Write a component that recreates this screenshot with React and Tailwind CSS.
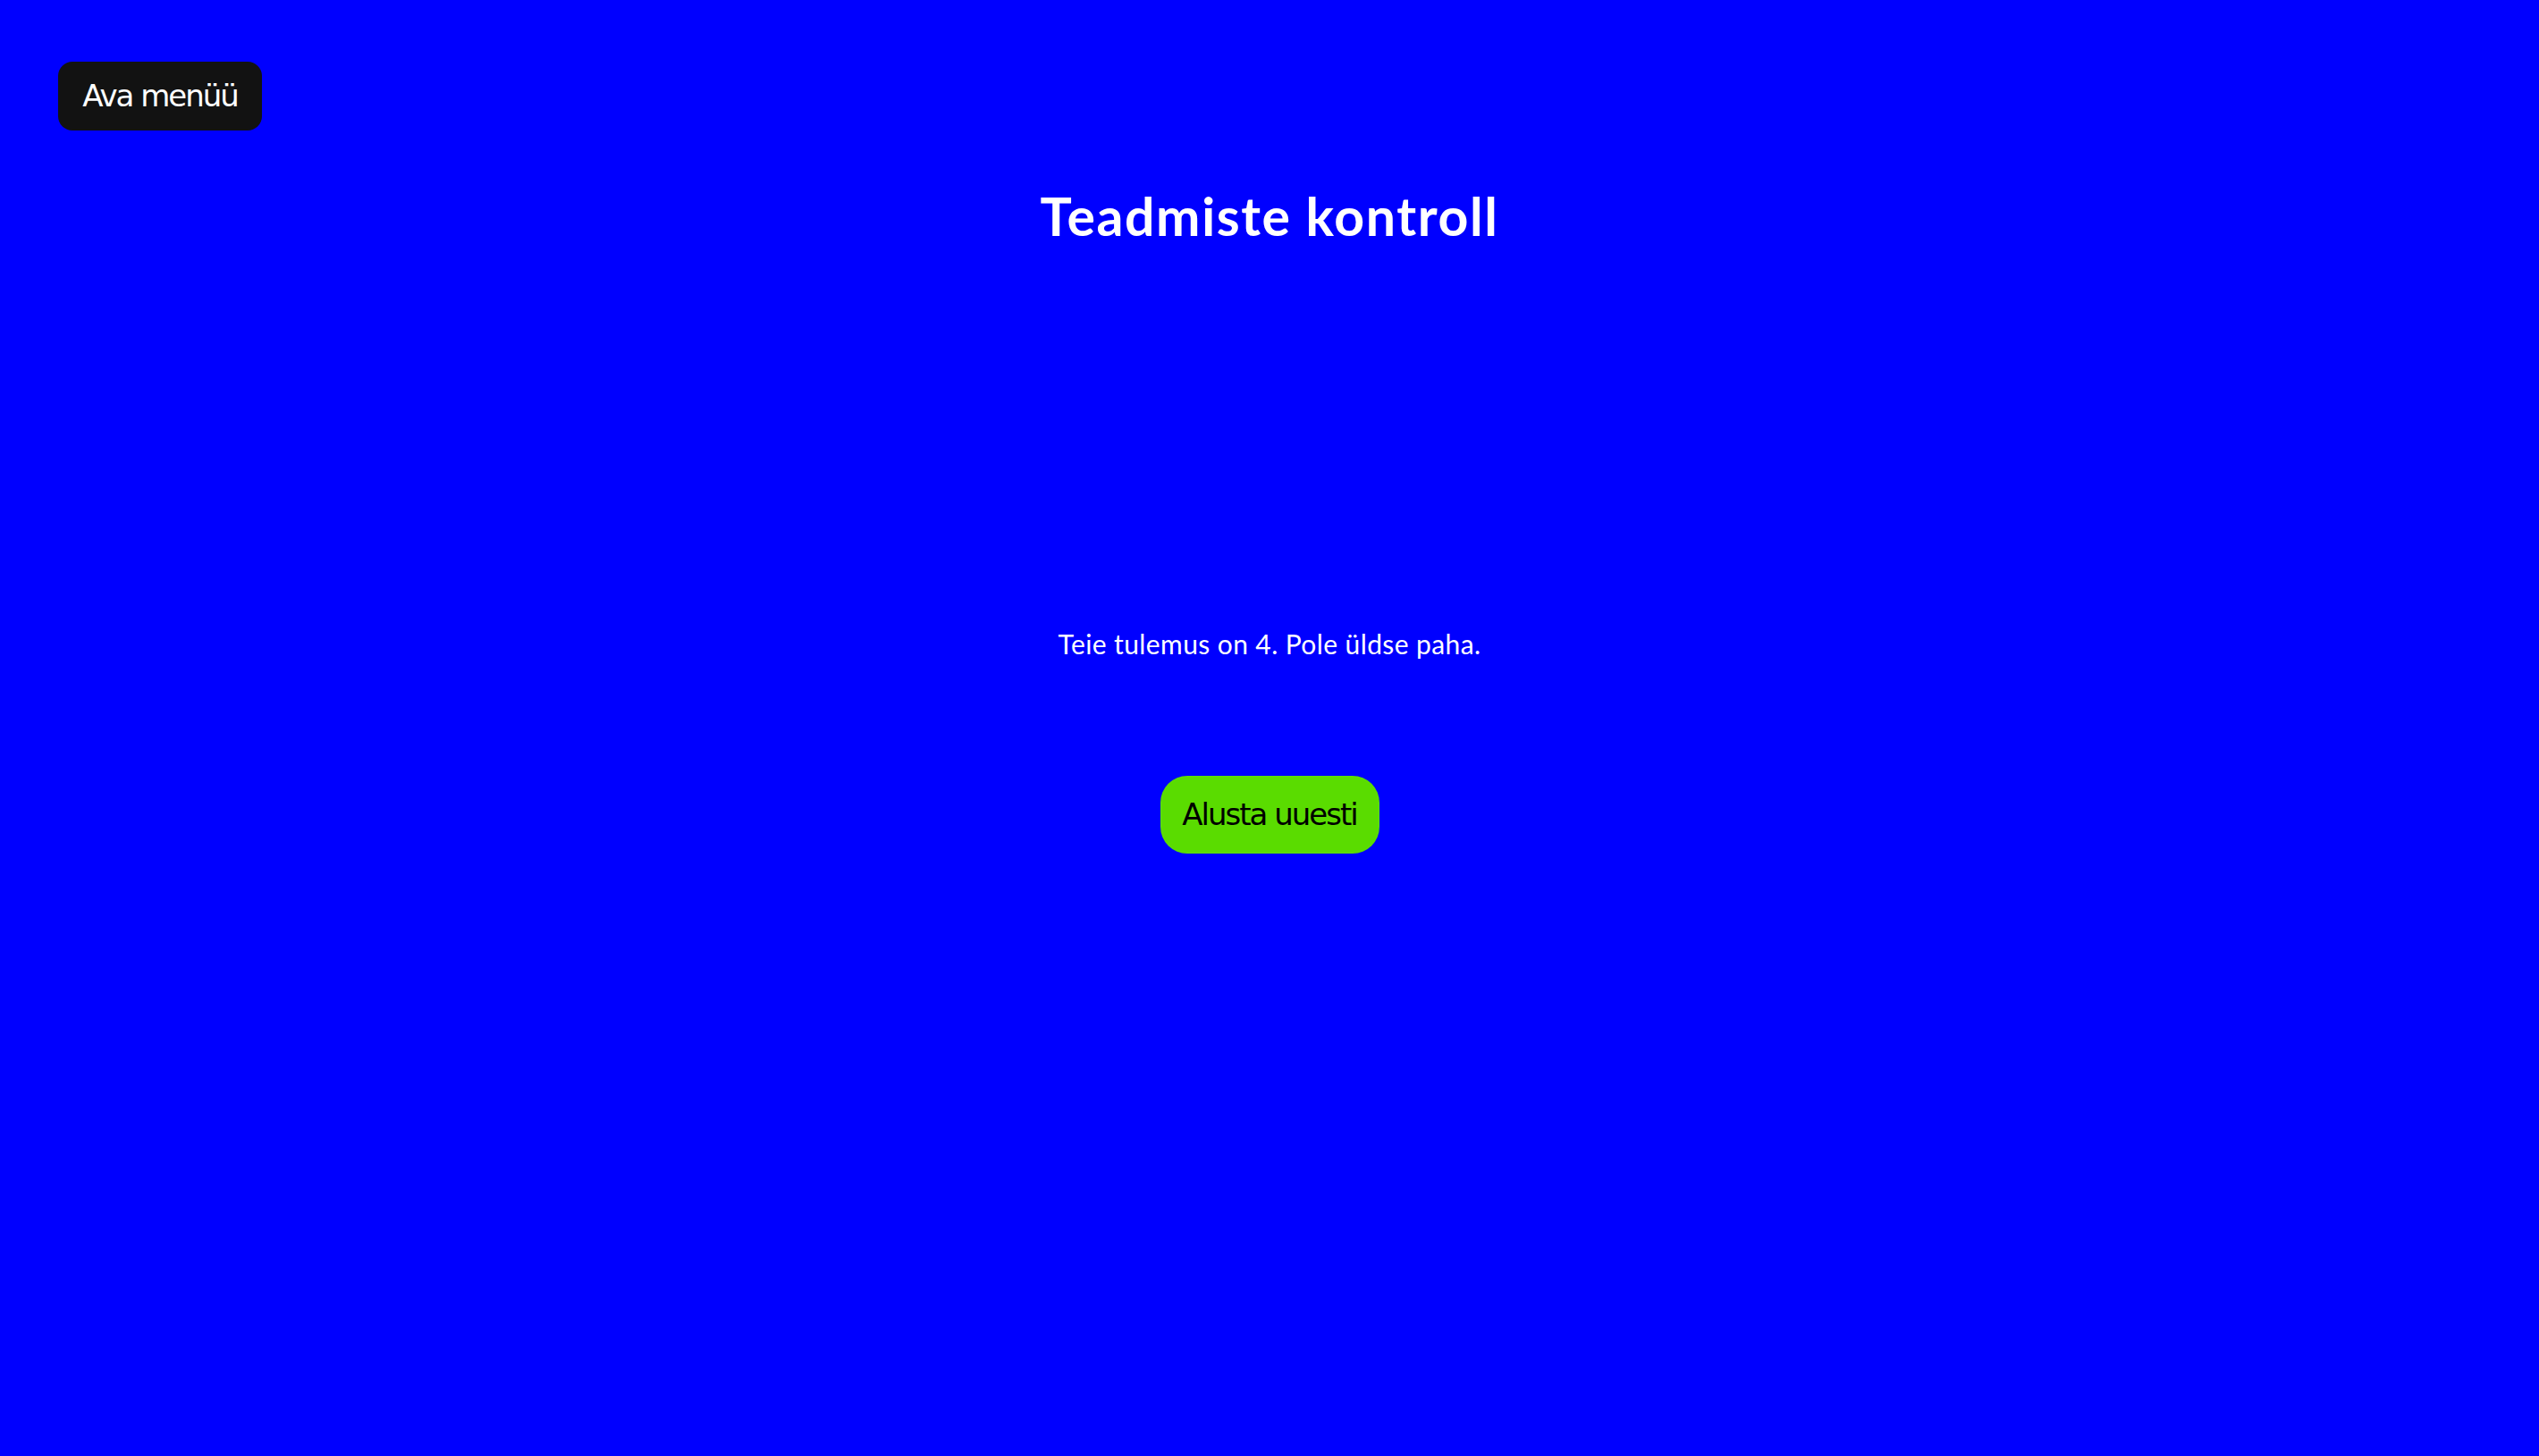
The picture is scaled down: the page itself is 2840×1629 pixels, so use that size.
import React from "react"

export default function App() {
  return (
    <div className="min-h-screen w-full bg-[#0000ff] text-white">
      {/* Top bar with menu toggle */}
      <div className="pt-[69px] pl-[65px]">
        <button
          type="button"
          className="h-[77px] w-[228px] rounded-[16px] bg-[#121212] text-white text-[34px] tracking-[-2px] font-['DejaVu_Sans',sans-serif] flex items-center justify-center"
        >
          Ava menüü
        </button>
      </div>

      <h1 className="mt-[61px] text-center text-[59px] leading-[70px] tracking-[1.6px] font-bold font-['Lato',sans-serif]">
        Teadmiste kontroll
      </h1>

      <main className="flex flex-col items-center">
        <p className="mt-[425px] text-[30px] leading-[36px] tracking-[0.4px] font-['Lato',sans-serif]">
          Teie tulemus on 4. Pole üldse paha.
        </p>
        <button
          type="button"
          className="mt-[130px] h-[87px] w-[245px] rounded-[30px] bg-[#5adc00] text-black text-[34px] tracking-[-2px] font-['DejaVu_Sans',sans-serif] flex items-center justify-center"
        >
          Alusta uuesti
        </button>
      </main>
    </div>
  )
}
